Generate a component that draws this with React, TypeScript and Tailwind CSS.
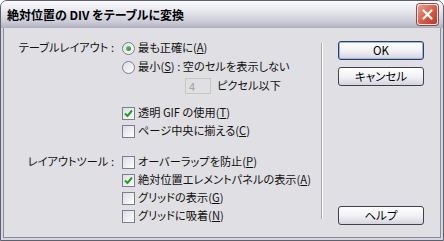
import React from "react";

const font = "font-['Noto_Sans_CJK_JP','Noto_Sans',sans-serif] [font-feature-settings:'palt']";

function Radio({ checked }: { checked?: boolean }) {
  return (
    <span className="relative flex h-[13px] w-[13px] shrink-0 items-center justify-center rounded-full border border-[#7a7e92] bg-gradient-to-br from-[#dcdce4] to-white">
      {checked && (
        <span className="h-[5px] w-[5px] rounded-full bg-gradient-to-br from-[#6fd26f] to-[#1e8a1e]" />
      )}
    </span>
  );
}

function Check({ checked }: { checked?: boolean }) {
  return (
    <span className="flex h-[13px] w-[13px] shrink-0 items-center justify-center border border-[#7a7e92] bg-gradient-to-br from-[#dcdce4] to-white">
      {checked && (
        <svg width="9" height="9" viewBox="0 0 9 9">
          <path d="M1 4.5 L3.5 7 L8 1.5" fill="none" stroke="#21a121" strokeWidth="2" />
        </svg>
      )}
    </span>
  );
}

function Key({ k }: { k: string }) {
  return (
    <>
      (<u>{k}</u>)
    </>
  );
}

function Btn({ label, main }: { label: string; main?: boolean }) {
  return (
    <div
      className={`flex h-[19px] w-[86px] items-center justify-center rounded-[3px] border bg-gradient-to-b from-white via-[#f2f2f6] to-[#d4d4de] text-[11.5px] leading-none text-black ${
        main ? "border-[#2c3e62] shadow-[inset_0_0_0_1px_#9db6e2]" : "border-[#3f4150]"
      }`}
    >
      {label}
    </div>
  );
}

// one option line: box + label, indented to the control column
function Opt({ box, children, indent = true }: { box: React.ReactNode; children: React.ReactNode; indent?: boolean }) {
  return (
    <div className={`${indent ? "ml-[118px]" : "ml-[6px]"} flex items-center gap-[3px] whitespace-nowrap`}>
      {box}
      <span>{children}</span>
    </div>
  );
}

export default function App() {
  return (
    <div className={`flex h-[241px] w-[444px] flex-col overflow-hidden rounded-t-[7px] border border-[#5e6070] bg-[#d6d6de] text-[11.2px] leading-none text-[#111] ${font}`}>
      {/* title bar */}
      <div className="flex h-[27px] shrink-0 items-center bg-[linear-gradient(#fbfbfd,#e8e8ee_35%,#c9c9d5_80%,#aeaebe)] pl-[6px] pr-[5px]">
        <span className="whitespace-nowrap text-[12px] font-bold text-black">絶対位置の DIV をテーブルに変換</span>
        <div className="ml-auto flex h-[21px] w-[21px] items-center justify-center rounded-[3px] border border-[#f4e4e0] bg-gradient-to-br from-[#eaa08e] via-[#d8604a] to-[#b23a2a] shadow-[0_0_0_1px_#8a5050]">
          <svg width="11" height="11" viewBox="0 0 11 11">
            <path d="M1.5 1.5 L9.5 9.5 M9.5 1.5 L1.5 9.5" stroke="white" strokeWidth="2.2" strokeLinecap="round" />
          </svg>
        </div>
      </div>

      {/* client */}
      <div className="flex flex-1 px-[2px] pb-[2px]">
        <div className="flex flex-1 border border-t-0 border-[#8a8c9c] bg-[#e0dfe3]">
          {/* left options */}
          <div className="flex w-[317px] flex-col pt-[11px]">
            <div className="flex h-[18px] items-center">
              <span className="w-[112px] whitespace-nowrap pr-[2px] text-right">テーブルレイアウト :</span>
              <Opt box={<Radio checked />} indent={false}>
                最も正確に<Key k="A" />
              </Opt>
            </div>
            <div className="mt-px flex h-[18px] items-center">
              <Opt box={<Radio />}>
                最小<Key k="S" /> : 空のセルを表示しない
              </Opt>
            </div>
            <div className="mt-px flex h-[18px] items-center whitespace-nowrap">
              <div className="ml-[181px] flex h-[16px] w-[26px] items-center border border-[#c9c7ba] bg-[#e0dfe3] pl-[3px] text-[11px] text-[#a0a0a0]">
                4
              </div>
              <span className="ml-[6px]">ピクセル以下</span>
            </div>
            <div className="mt-[9px] flex h-[18px] items-center">
              <Opt box={<Check checked />}>
                透明 GIF の使用<Key k="T" />
              </Opt>
            </div>
            <div className="flex h-[18px] items-center">
              <Opt box={<Check />}>
                ページ中央に揃える<Key k="C" />
              </Opt>
            </div>
            <div className="mt-[13px] flex h-[18px] items-center">
              <span className="w-[112px] whitespace-nowrap pr-[2px] text-right">レイアウトツール :</span>
              <Opt box={<Check />} indent={false}>
                オーバーラップを防止<Key k="P" />
              </Opt>
            </div>
            <div className="flex h-[18px] items-center">
              <Opt box={<Check checked />}>
                絶対位置エレメントパネルの表示<Key k="A" />
              </Opt>
            </div>
            <div className="flex h-[18px] items-center">
              <Opt box={<Check />}>
                グリッドの表示<Key k="G" />
              </Opt>
            </div>
            <div className="flex h-[18px] items-center">
              <Opt box={<Check />}>
                グリッドに吸着<Key k="N" />
              </Opt>
            </div>
          </div>

          {/* separator */}
          <div className="mt-[15px] mb-[18px] w-[2px] border-l border-r border-l-[#a5a5b0] border-r-white" />

          {/* buttons */}
          <div className="ml-[15px] flex flex-col pt-[13px] pb-[12px]">
            <Btn label="OK" main />
            <div className="mt-[7px]">
              <Btn label="キャンセル" />
            </div>
            <div className="mt-auto">
              <Btn label="ヘルプ" />
            </div>
          </div>
        </div>
      </div>
    </div>
  );
}
